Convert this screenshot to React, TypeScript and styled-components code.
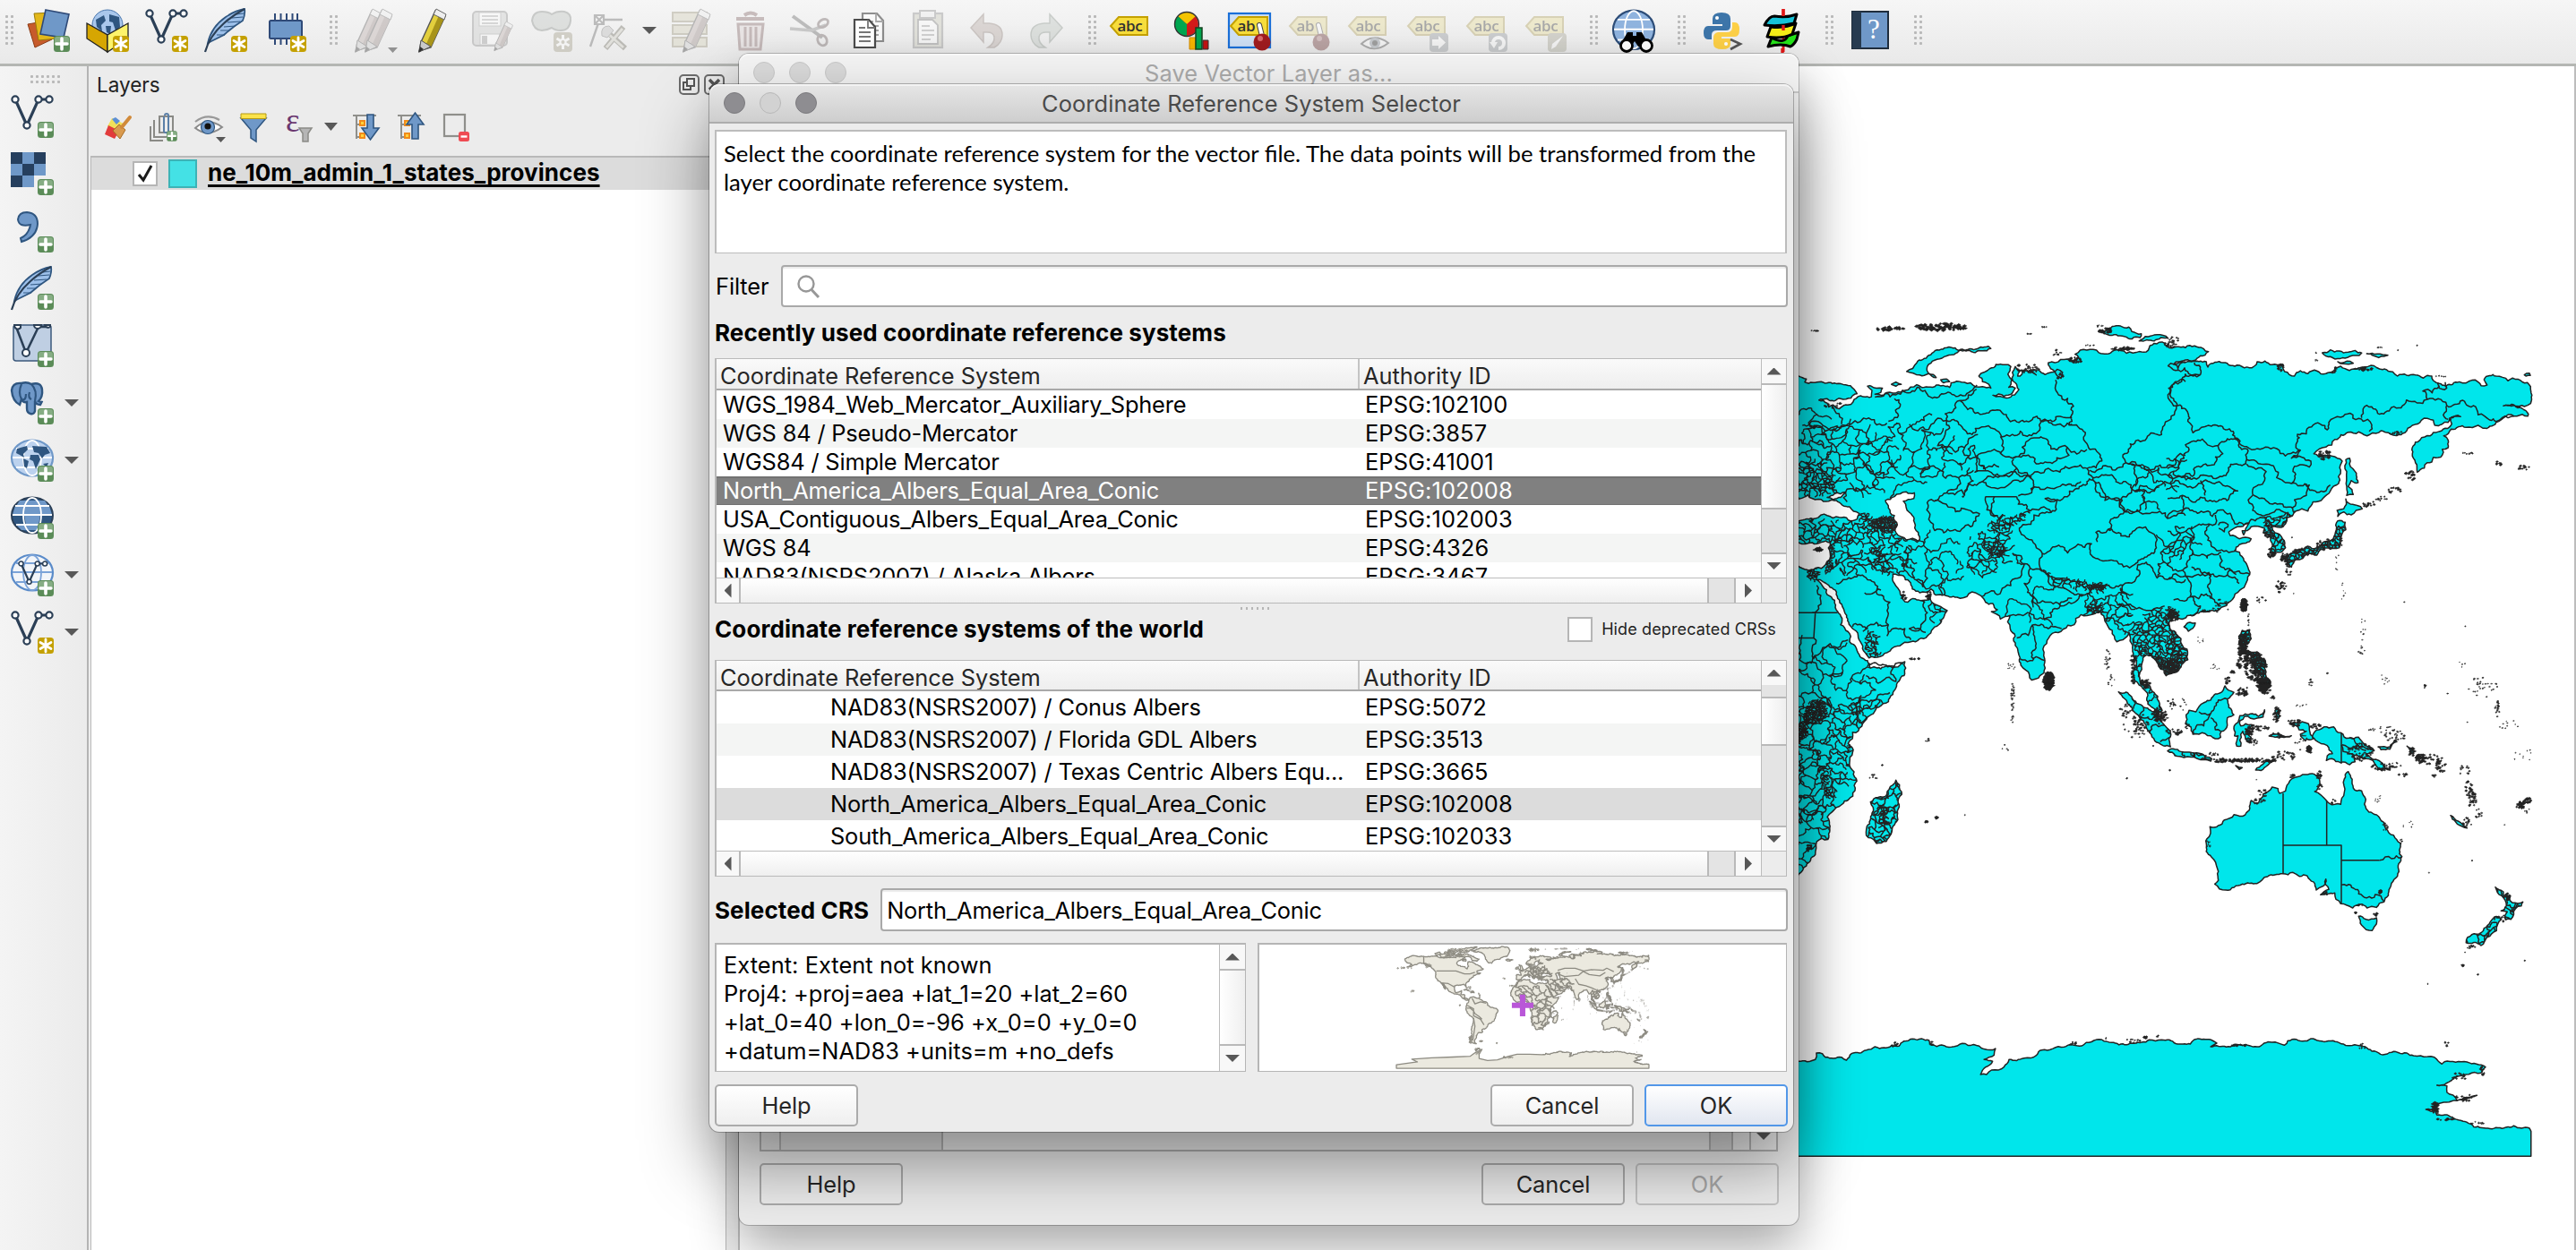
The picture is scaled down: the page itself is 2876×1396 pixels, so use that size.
import React from "react";
import styled, { createGlobalStyle, css } from "styled-components";

const GlobalStyle = createGlobalStyle`
  *, *::before, *::after { box-sizing: border-box; }
  html, body { margin: 0; padding: 0; overflow: hidden; background: #fff; }
  body { font-family: Inter, "Liberation Sans", sans-serif; font-size: 25.4px; letter-spacing: -0.1px; color: #000; }
`;

/* ---------- geometry helpers for the maps ---------- */

type P = [number, number];
type Frame = [number, number, number, number];

const FRAMES: Record<string, Frame> = {
  w: [2000, 340, 1 / 3, 0.42088],
  e: [2420, 340, 1 / 3, 1 / 3],
  s: [2340, 760, 1 / 3, 1 / 3],
  a: [2000, 1120, 0.5587, 1 / 3],
  g: [1850.2, 803.5, 5.417, -5.417],
};

function trace(src: string): P[] {
  let f: Frame = FRAMES.g;
  return src.trim().split(/\s+/).map((tok) => {
    if (/[a-z]:/.test(tok)) {
      f = FRAMES[tok[0]];
      tok = tok.slice(2);
    }
    const [x, y] = tok.split(",").map(Number);
    return [f[0] + x * f[2], f[1] + y * f[3]] as P;
  });
}

function random(seed: number) {
  let s = seed;
  return () => {
    s = (s + 0x6d2b79f5) | 0;
    let t = Math.imul(s ^ (s >>> 15), 1 | s);
    t = (t + Math.imul(t ^ (t >>> 7), 61 | t)) ^ t;
    return ((t ^ (t >>> 14)) >>> 0) / 4294967296;
  };
}

function rough(points: P[], closed: boolean, amp: number, seed: number): string {
  const rnd = random(seed);
  const out: P[] = [];
  const split = (a: P, b: P) => {
    const dx = b[0] - a[0];
    const dy = b[1] - a[1];
    const len = Math.hypot(dx, dy);
    if (len < 4) {
      out.push(b);
      return;
    }
    const k = (rnd() - 0.5) * 2 * amp * Math.min(1, 14 / len + 0.35);
    const m: P = [(a[0] + b[0]) / 2 - dy * k, (a[1] + b[1]) / 2 + dx * k];
    split(a, m);
    split(m, b);
  };
  out.push(points[0]);
  const n = closed ? points.length : points.length - 1;
  for (let i = 0; i < n; i++) split(points[i], points[(i + 1) % points.length]);
  return "M" + out.map((p) => p[0].toFixed(1) + " " + p[1].toFixed(1)).join("L") + (closed ? "Z" : "");
}

function inside(p: P, poly: P[]): boolean {
  let hit = false;
  for (let i = 0, j = poly.length - 1; i < poly.length; j = i++) {
    const a = poly[i];
    const b = poly[j];
    if (a[1] > p[1] !== b[1] > p[1] && p[0] < ((b[0] - a[0]) * (p[1] - a[1])) / (b[1] - a[1]) + a[0]) hit = !hit;
  }
  return hit;
}

/* irregular honeycomb of small districts inside a region */
function districts(region: string, size: number, seed: number): string {
  const poly = trace(region);
  const xs = poly.map((p) => p[0]);
  const ys = poly.map((p) => p[1]);
  const x0 = Math.min(...xs);
  const y0 = Math.min(...ys);
  const cols = Math.ceil((Math.max(...xs) - x0) / size) + 1;
  const rows = Math.ceil((Math.max(...ys) - y0) / (size * 0.7)) + 1;
  const vertex = (c: number, r: number): P => {
    const rnd = random(seed * 7919 + c * 131 + r * 7177);
    return [
      x0 + c * size * 0.5 + (rnd() - 0.5) * size * 0.85 + Math.sin(r * 2.3 + seed) * size * 0.2,
      y0 + r * size * 0.7 + ((c + r) % 2 ? size * 0.18 : 0) + (rnd() - 0.5) * size * 0.75 + Math.sin(c * 0.9 + seed) * size * 0.3,
    ];
  };
  const skip = random(seed + 4001);
  let d = "";
  for (let r = 0; r <= rows; r++) {
    for (let c = 0; c <= cols * 2; c++) {
      const v = vertex(c, r);
      const drop = skip() < 0.07;
      if (!inside(v, poly)) continue;
      if (!drop) d += rough([v, vertex(c + 1, r)], false, 0.34, seed + c * 3 + r * 17);
      if ((c + r) % 2) d += rough([v, vertex(c, r + 1)], false, 0.34, seed + c * 5 + r * 11);
    }
  }
  return d;
}

const EURAFRICA = trace(`w:24,190 50,198 45,206 100,205 150,210 210,225 220,237 200,248 165,250 120,250 92,254 120,262 125,272 160,277 175,268 200,265
 210,252 240,245 268,245 270,228 255,217 285,222 305,222 300,233 280,238 310,240 350,235 380,228 420,213 445,220 500,216 530,220 535,208 560,204 600,208 640,218 668,222 660,211
 640,205 628,190 645,180 665,170 685,159 715,160 735,165 725,185 738,200 728,220 750,222 740,235 712,244 675,241 720,248 748,240 762,226 750,208 740,180 750,165 765,178 758,190 780,175 820,187 800,175 850,186 890,172
 908,180 903,196 885,182 865,165 860,155 945,152 962,140 950,132 1030,128 1080,122 1165,125 1215,103 1250,103 e:0,140 60,145 120,148 137,158
 110,172 60,186 20,200 80,192 130,192 135,210 145,198 200,197 225,207 290,207 300,192 350,202 385,204 392,225 425,240 445,222 470,232 530,232 560,228
 560,213 580,207 640,213 720,218 770,240 830,236 885,240 890,255 910,265 1000,263 1040,260 1050,272 1070,270 1060,252 1140,256 1205,262 1216,275
 1216,332 1195,342 1160,338 1125,340 1180,345 1205,362 1207,374 1170,374 1100,395 1057,415 1040,405 1000,412 950,418 925,440 940,455 940,480 920,485 920,505
 890,512 885,528 870,530 860,548 836,562 830,530 820,500 822,475 845,455 880,440 930,415 952,400 950,378 982,376 945,380 940,395 895,405 890,388 850,388 820,405 795,430
 740,430 715,423 640,427 605,428 560,452 530,478 490,500 520,508 550,508 585,525 580,555 573,600 545,625 520,650 470,692 430,692 400,715 395,735
 350,745 360,765 385,785 395,815 375,830 345,832 350,800 345,780 320,765 325,750 280,745 250,758 255,772 272,732 245,745 205,762 210,775 240,785 280,785
 240,805 225,825 250,845 265,870 272,890 275,905 260,940 235,965 210,995 180,1015 130,1030 80,1042 30,1045 5,1065 10,1090 45,1120 65,1155 68,1190
 45,1215 0,1240 w:1255,985 1230,960 1215,940 1190,930 1175,950 1165,985 1180,1008 1215,1030 1242,1078 1225,1082 1190,1050 1165,1010 1145,980 1152,940 1140,900
 1130,870 1110,890 1090,895 1075,865 1050,840 1035,815 1010,822 970,823 910,862 855,900 850,965 805,997 785,970 750,905 733,860 733,825 700,835 670,815 690,810 650,790 635,773
 555,777 505,772 478,768 468,755 430,765 405,755 375,720 340,715 345,740 365,770 390,790 440,785 465,778 480,795 522,812 500,845 455,880 400,895 330,920
 260,938 248,925 235,900 205,860 185,825 155,780 125,745 85,730 120,770 150,810 165,850 195,895 230,935 255,945 265,965 310,962 380,948 383,965 360,1000 340,1035
 300,1065 255,1095 205,1135 190,1165 195,1215 210,1240 213,1290 190,1315 150,1335 120,1360 128,1400 122,1420 85,1425 80,1460 50,1490 24,1512
 g:27,-33.5 20,-34.8 18,-33 15,-27 12,-17 13,-9 9,-1 9,4 4,6 -4,5 -8,4 -13,8 -17,14 -16,21 -10,29 -6,35 3,37 10,37 11,33 19,30 24,32
 w:24,695 80,700 115,690 130,660 130,632 70,632 24,632 g:27,37 26,40 23,38 20,40 13,45 18,40 16,38 10,44 3,43 -2,37 -9,37 -9,43 -2,43 -4,48 3,51 8,54 10,57 12,54
 20,55 23,59 29,60 22,61 24,65 18,62 16,57 12,58 5,59 6,62 14,68 25,71`);

const BLACK_SEA = trace("w:0,530 30,515 55,505 90,517 125,522 150,520 195,537 228,555 220,570 190,572 160,565 120,560 80,568 24,575 0,575");
const AZOV = trace("w:120,512 145,502 182,498 165,512 140,518");
const CASPIAN = trace("w:315,520 345,510 385,497 412,500 410,515 375,522 385,540 405,560 412,578 425,605 425,628 385,625 350,605 355,585 345,560 325,540");
const ANTARCTICA = trace(`a:0,197 14,196 48,190 50,168 62,170 68,182 100,182 110,192 120,170 150,158 185,150 215,145 225,128 260,120 275,125 280,142 320,148 408,153 405,175 385,190 402,196
 378,240 390,240 400,225 425,215 435,190 465,185 490,175 500,158 545,148 560,140 640,133 700,132 715,124 740,124 797,138 805,123 835,122 850,135 838,147 900,142 960,132
 985,142 992,127 1060,128 1130,142 1160,162 1230,168 1285,182 1300,205 1305,197 1350,198 1387,215 1378,235 1330,247 1308,270 1290,276 1310,278 1310,300 1330,327 1370,310 1330,328 1288,335
 1285,350 1268,357 1288,362 1290,376 1350,400 1475,420 1478,430 1478,514 g:-180,-90 -180,-85 -150,-81 -158,-77 -130,-75 -100,-74 -75,-73 -68,-68 -58,-63 -62,-70 -62,-76 -50,-79 -36,-78 -20,-73 -8,-70 10,-70`);
const POLE_CORNER = ANTARCTICA.findIndex((p) => p[1] > 1290);

const ISLANDS: P[][] = [
  "w:350,1262 362,1275 370,1300 355,1345 340,1385 318,1425 285,1430 258,1415 253,1385 270,1350 265,1320 290,1308 320,1300 340,1275",
  "w:386,178 420,155 460,135 560,122 660,111 668,117 640,123 545,133 480,148 455,165 460,183 485,194 430,187",
  "w:1030,72 1075,58 1130,60 1140,72 1172,78 1168,88 1115,85 1060,80",
  "w:1165,97 1185,85 1225,80 1262,90 1215,97",
  "w:335,212 350,206 368,212 350,217",
  "w:500,200 520,198 530,205 510,208",
  "s:76,38 120,55 160,90 205,115 230,150 250,175 250,222 225,218 180,175 148,125 120,90 95,60",
  "s:240,236 265,230 295,240 330,243 360,248 388,262 385,270 340,262 295,258 265,252",
  "s:432,18 462,40 440,62 445,90 462,115 440,125 440,150 420,170 418,190 400,195 385,185 345,180 325,180 318,155 300,145 302,115 312,100 335,105 345,88 385,65 400,45 415,42",
  "s:482,118 500,112 545,120 565,98 560,122 540,126 498,120 482,135 485,152 520,148 530,150 500,162 520,190 518,208 505,200 492,170 485,180 485,220 472,220 476,185 464,185 476,140",
  "s:725,190 765,155 820,175 880,190 900,215 932,235 905,245 930,265 985,300 950,298 905,262 865,250 868,272 850,282 820,275 790,262 772,268 775,252 792,245 775,218 735,200",
  "s:660,145 690,138 712,145 715,165 728,195 700,200 685,180 705,170 680,165",
  "s:945,222 985,222 1000,200 1008,205 985,230 955,232",
  "s:845,305 862,360 890,370 905,430 950,460 970,495 1020,545 1025,590 1015,640 985,695 965,742 908,762 885,750 860,762 820,748 800,712 775,715 752,718 780,700 770,665 758,690 738,702 708,655 660,643 625,647 575,657 540,680 490,682 435,702 398,682 410,670 410,640 395,600 370,560 372,530 382,490 430,467 500,450 520,402 545,410 560,380 590,357 610,362 615,378 635,370 650,335 685,320 745,325 750,350 733,372 770,400 800,415 820,415 832,375 832,330",
  "s:880,790 905,800 940,795 940,815 925,838 905,835 890,820",
  "s:1338,692 1365,708 1370,725 1385,725 1395,745 1430,742 1425,755 1405,765 1390,800 1372,802 1378,775 1357,772 1375,755 1370,735 1345,710",
  "s:1335,792 1358,800 1342,838 1310,860 1290,888 1240,878 1245,860 1275,850 1300,830 1320,810",
  "s:1188,452 1215,472 1243,494 1235,493 1205,474",
  "s:535,300 560,280 598,268 570,288 545,300",
  "s:600,100 612,92 615,120 605,130",
  "s:580,186 615,180 655,185 640,188 600,190",
  "s:1042,220 1065,240 1058,244",
  "s:468,285 490,292 480,298",
  "e:597,520 610,515 620,550 638,597 615,590 605,610 622,637 600,640 598,600 600,560",
  "e:597,652 620,670 652,685 615,705 590,695 570,710 568,690 590,685",
  "e:570,725 595,730 597,755 580,785 575,815 545,820 520,820 500,840 470,835 430,855 415,880 400,865 405,840 440,820 500,815 525,795 555,785 565,755",
  "e:55,1080 75,1065 93,1067 85,1085 70,1095",
  "e:518,162 545,152 605,160 650,163 610,174 545,175",
  "e:667,165 738,170 725,174 690,172",
  "e:570,192 600,190 622,197 590,199",
  "e:1195,236 1212,230 1215,238 1200,240",
  "e:250,1092 275,1090 280,1120 262,1140 262,1160 300,1165 328,1195 328,1225 345,1270 328,1298 305,1280 318,1250 290,1215 280,1175 250,1170 240,1135",
].map(trace);

const AMERICAS: P[][] = [
  "g:-168,66 -165,68 -156,71 -141,70 -128,70 -115,68 -108,68 -95,68 -95,72 -90,69 -82,69 -86,66 -94,60 -92,57 -82,55 -79,52 -77,56 -78,62 -72,62 -65,58 -61,56 -56,52 -65,49 -65,47 -60,46 -66,44 -70,43 -70,41 -76,37 -76,35 -81,31 -80,25 -82,28 -84,30 -90,29 -97,28 -97,22 -95,18 -91,19 -87,21 -88,16 -83,15 -83,10 -78,9 -77,7 -80,7 -85,10 -88,13 -95,16 -105,20 -107,24 -112,30 -114,31 -110,23 -112,25 -117,33 -121,35 -124,40 -124,48 -130,54 -135,58 -140,60 -148,60 -152,58 -156,57 -165,54.500 -158,58 -165,61",
  "g:-77,7 -75,11 -72,12 -68,11 -62,10 -57,6 -51,4 -50,0 -44,-3 -37,-5 -35,-8 -38,-13 -40,-20 -42,-23 -48,-26 -50,-30 -54,-34 -58,-35 -57,-38 -62,-39 -65,-42 -66,-46 -69,-51 -66,-55 -72,-53 -75,-50 -73,-40 -72,-30 -70,-20 -76,-14 -81,-5 -80,0",
  "g:-73,78 -66,80 -60,82 -45,82 -30,84 -20,82 -18,78 -20,74 -22,70 -30,68 -40,65 -44,60 -49,61 -53,66 -54,70 -58,75 -66,76",
  "g:-90,73 -78,73 -70,70 -62,66 -65,63 -72,64 -73,67 -78,70 -88,70",
  "g:-118,73 -110,73 -105,73 -102,69 -110,68 -116,69",
  "g:-125,74 -118,76 -116,73 -123,71",
  "g:-90,76 -86,80 -80,82 -65,83 -75,79 -80,76",
  "g:-100,76 -95,79 -92,77 -98,73",
  "g:-86,66 -81,66 -81,63 -86,64",
  "g:-24,65 -20,66 -14,65 -18,63",
  "g:-5,50 1,51 -2,57 -5,58 -3,54",
  "g:-10,52 -6,52 -6,55 -9,54",
  "g:-84,22 -75,20 -80,23",
  "g:-74,18 -69,18 -70,20 -73,20",
].map(trace);

const BORDERS = [
  "w:280,246 350,240 545,240 600,230 622,214",
  "w:520,308 515,290 550,262 565,255 620,225",
  "w:565,255 580,268 690,280 720,292 900,297 940,300",
  "w:885,200 885,215 895,240 945,270 940,310 930,320 985,340 1000,385 1030,395 1040,415 990,435 1010,460 1040,490 1050,520 1110,520",
  "w:395,318 520,308 560,318 605,345 680,330 740,345 790,350 830,320 940,318",
  "w:520,308 515,345 490,375 520,378 580,380 625,345",
  "w:345,250 365,265 355,300 325,310",
  "w:60,318 200,318 320,315",
  "w:135,270 160,290 168,318",
  "w:700,350 705,375 700,395 740,408 780,395 785,365",
  "w:785,365 860,370 925,380 990,385",
  "w:740,408 800,405 850,418 930,400 925,380",
  "w:580,380 580,400 620,405 700,392",
  "w:620,400 615,445 700,455 755,435 745,410",
  "w:755,435 800,455 870,440 900,445 990,435",
  "w:430,450 440,445 490,435 560,460 520,500 460,520",
  "w:560,460 610,440",
  "w:640,470 805,458",
  "w:580,508 640,470 700,455 800,460 805,500 760,508",
  "w:805,500 890,485 970,470",
  "w:520,500 570,492 580,508",
  "w:460,520 460,570 480,600 540,600 600,590 630,555 590,545 550,550 480,520",
  "w:650,510 655,545 690,560 680,510",
  "w:755,510 760,530 800,548 870,552 890,520 850,515 890,518 950,490 990,470 1010,465",
  "w:870,552 770,590 770,610 830,650 840,660 1005,635 1010,670 1080,680 1150,690 1190,670 1220,640 1215,610 1150,600 1060,597 1020,605 1025,630",
  "w:1060,597 1070,570 1115,550 1060,510 1010,465",
  "w:1115,550 1200,555 1320,560",
  "w:1115,550 1165,548 1175,510",
  "w:740,660 770,690 800,700 860,735 920,755 1000,755 1110,745 1150,735 1160,690",
  "w:840,660 830,690 860,715 930,730 1000,745",
  "w:740,660 780,690 740,730 690,770 640,775",
  "w:800,700 780,740 800,770 860,790 930,790 980,770",
  "w:735,825 800,820 870,830 900,800 940,780",
  "w:755,885 810,850 860,860 905,860",
  "w:805,850 820,900 810,940 850,945",
  "w:765,940 800,945 812,940",
  "w:1160,690 1210,700 1260,730 1320,730",
  "w:1110,745 1120,790 1180,810 1250,800",
  "w:1285,205 1280,250 1290,270 1250,320 1240,345 1190,355 1135,370 1110,405 1120,420 1190,440 1220,430 1320,400",
  "w:1262,162 1320,152",
  "w:1285,205 1320,205",
  "w:1000,440 1060,430 1120,420 1150,440 1160,470 1140,490",
  "w:1010,460 1100,475 1140,490 1200,500 1250,470 1320,480",
  "w:1115,550 1110,510 1140,490",
  "w:150,740 250,725 330,790 325,850 250,860 205,855",
  "w:245,765 290,755 300,758",
  "w:325,850 320,880",
  "w:185,720 240,690 330,715",
  "w:325,870 380,860 400,890",
  "w:440,785 450,830 395,860 450,870",
  "w:400,690 440,750",
  "w:440,750 455,700 510,730 510,772",
  "w:590,690 640,725 690,700",
  "w:85,745 90,800 70,818",
  "w:75,885 75,940 130,900 190,890",
  "w:255,960 345,960 350,1000 290,1005 250,985",
  "w:220,1120 215,1060 330,1030",
  "w:345,960 375,955",
  "e:0,205 110,235 90,195",
  "e:110,235 20,265 20,340 60,350 85,430 170,408 220,425 240,465 310,485 445,488 415,515 480,525 475,545 420,560 415,600 475,605 465,640 425,655 420,692",
  "e:445,488 430,480 435,435 535,420 540,395 580,378 640,382 670,385 675,425",
  "e:650,380 655,350 750,345 800,320 870,318 855,290 910,275 905,262",
  "e:870,318 935,338 1035,350 1040,370 1120,380 1160,374",
  "e:935,338 940,385",
  "e:905,275 935,280 930,260",
  "e:0,550 55,515 60,470 175,465 185,500 110,545 40,575 0,572",
  "e:175,465 200,450 225,450 240,465 270,490 265,520 330,535 365,580 415,600",
  "e:40,575 170,580 250,540 265,520",
  "e:265,535 330,560 325,590 285,620 300,645 360,665 420,685",
  "e:285,640 270,655 285,690 330,705 400,700",
  "e:0,715 100,700 150,710 210,700 225,735 280,720 330,720",
  "e:60,605 180,600 235,625 150,660 50,640 0,650",
  "e:110,590 125,640",
  "e:50,640 45,700",
  "e:0,760 60,760 100,740 150,740 160,705",
  "e:85,830 90,780 60,760",
  "e:140,735 135,790 165,825 230,825",
  "e:0,865 50,890 85,830 180,830",
  "e:80,880 180,910 275,905",
  "e:50,890 60,910 145,910 140,960 150,985",
  "e:0,920 60,910 75,980 130,970 150,985 200,1005",
  "e:175,840 180,880 230,905",
  "e:200,905 240,935",
  "e:20,990 75,980 110,1010 75,1040",
  "e:465,600 500,630 530,625 545,605",
  "e:170,740 185,730 202,745 190,762 172,750",
  "s:950,602 990,597 1025,592",
  "s:822,685 840,687 880,715 935,717 965,740",
  "s:345,105 385,110 410,65 440,62",
  "s:385,110 375,130 335,155 330,180",
  "s:385,125 405,150 400,165 418,170",
  "s:825,215 860,225 905,235",
  "s:850,190 870,210 930,232",
  "s:822,215 850,245 905,262",
  "s:120,60 125,95",
  "s:160,90 148,125 180,130 205,115",
  "s:180,175 190,150 230,150",
  "s:250,190 215,205",
].map((b, i) => rough(trace(b), false, 0.3, 500 + i)).join("");

const STRAIGHT_BORDERS = [
  "s:627,378 627,647", "s:773,402 773,552", "s:627,552 822,552 822,750", "s:822,602 950,602", "s:822,175 822,278",
  "w:24,818 155,818", "w:24,885 75,885 80,820", "w:650,510 755,510",
].map((b) => "M" + trace(b).map((p) => p.join(" ")).join("L")).join("");

const DISTRICTS = [
  districts("w:0,320 330,320 330,420 300,500 120,500 0,510", 15, 3),
  districts("w:0,240 140,270 130,320 0,320", 26, 5),
  districts("w:0,410 120,420 150,500 0,515", 10, 61),
  districts("w:330,310 480,320 500,440 330,500", 27, 7),
  districts("w:480,375 640,370 640,440 500,430", 26, 8),
  districts("w:0,570 220,575 330,560 390,640 330,640 0,632", 8, 9),
  districts("w:262,575 300,560 335,562 350,578 372,582 350,603 300,600 262,590", 2.6, 10),
  districts("w:225,550 270,560 280,600 230,575", 5, 62),
  districts("w:130,635 400,640 390,715 260,700 130,720", 12, 12),
  districts("w:255,640 300,650 330,710 270,690", 7, 63),
  districts("w:115,640 138,640 135,700 112,720", 3.4, 32),
  districts("w:50,700 80,695 95,715 75,735 50,722", 3.4, 33),
  districts("w:390,600 520,620 580,770 480,765 380,710", 26, 13),
  districts("w:560,690 600,620 660,590 730,600 720,690 600,720", 11, 14),
  districts("w:650,580 690,560 740,565 800,545 740,590 680,605", 4.5, 15),
  districts("w:640,640 690,625 720,640 705,670 660,665", 4, 34),
  districts("w:850,715 1050,745 1040,765 870,740", 6, 16),
  districts("w:992,748 1010,738 1048,745 1040,757 1005,757", 2.4, 17),
  districts("w:980,760 1120,750 1130,880 1070,860 980,820", 12, 18),
  districts("w:1000,790 1040,790 1040,820 985,820", 4.5, 64),
  districts("w:1130,850 1200,810 1270,810 1320,870 1320,975 1255,985 1140,900", 6, 19),
  districts("w:1170,925 1230,935 1300,960 1280,990 1240,980 1190,940", 3, 35),
  districts("w:1140,880 1170,900 1240,1080 1150,990", 8, 36),
  districts("e:0,1070 70,1110 70,1210 0,1240", 7, 20),
  districts("e:0,1180 50,1190 30,1230 0,1240", 3.2, 37),
  districts("e:0,1010 40,1045 0,1060", 3.4, 38),
  districts("w:240,860 290,880 290,930 250,935", 4.5, 21),
  districts("w:430,780 530,800 500,850 460,830", 11, 22),
  districts("w:0,900 200,900 250,960 240,1050 0,1050", 21, 23),
  districts("w:0,1050 200,1050 200,1200 120,1340 0,1380", 13, 24),
  districts("w:200,1050 330,1040 260,1110 200,1130", 11, 25),
  districts("w:50,1065 70,1048 112,1055 118,1090 80,1112 30,1115", 2.5, 26),
  districts("w:0,1110 45,1110 52,1145 20,1165 0,1170", 2.5, 27),
  districts("w:90,1230 112,1225 130,1290 130,1315 108,1300", 4, 28),
  districts("w:120,1220 210,1220 213,1310 120,1340", 27, 39),
  districts("w:0,1340 130,1340 130,1420 0,1520", 20, 40),
  districts("w:1130,420 1320,400 1320,480 1160,480", 22, 41),
  districts("w:1130,480 1320,490 1320,545 1130,540", 26, 42),
  districts("w:700,760 900,770 850,850 740,830", 32, 43),
  districts("w:1220,560 1320,600 1320,690 1200,690", 22, 44),
  districts("e:320,710 430,690 400,840 330,840", 6.5, 29),
  districts("e:0,770 70,760 80,830 0,860", 20, 45),
].join("");

const ISLAND_DISTRICTS = [
  districts("e:395,815 500,790 600,720 600,830 400,885", 4.6, 51),
  districts("e:235,1085 350,1085 350,1300 235,1300", 3.4, 52),
  districts("w:260,1260 375,1260 340,1430 250,1430", 10, 53),
  districts("w:290,1330 320,1330 320,1390 290,1390", 4, 65),
  districts("s:1230,690 1435,690 1435,800 1350,800", 9, 54),
  districts("s:1230,790 1360,790 1300,890 1230,890", 12, 55),
  districts("s:240,230 390,235 390,272 240,260", 10, 56),
].join("");

/* small islands: centre, spread, count, largest radius */
const SPECKS: [string, number, number, number, number][] = [
  ["w:330,65", 16, 2, 26, 2.2], ["w:500,60", 30, 4, 90, 2.4], ["w:80,70", 6, 0.5, 10, 1], ["w:800,78", 4, 0.4, 6, 1], ["w:846,60", 4, 0.5, 6, 1],
  ["w:1050,70", 8, 3, 26, 1.8], ["w:1110,118", 14, 2, 30, 1.8], ["w:950,148", 8, 3, 26, 1.7], ["w:890,128", 6, 4, 10, 1.3], ["w:1000,108", 5, 1, 6, 1], ["w:1030,57", 5, 1, 6, 1],
  ["w:790,170", 14, 5, 30, 1.7], ["w:898,190", 4, 3, 10, 1.5], ["w:145,268", 12, 3, 18, 1.4], ["w:90,650", 5, 2, 18, 2],
  ["w:862,1000", 5.5, 10, 150, 2.4], ["w:740,1040", 2.5, 16, 30, 1.1], ["w:735,960", 5, 4, 9, 0.8], ["w:740,1100", 2, 4, 6, 1],
  ["w:1058,940", 3, 12, 18, 1.2], ["w:1072,1000", 4, 8, 10, 1], ["w:1146,960", 3, 20, 40, 1.7], ["w:1160,1120", 18, 14, 24, 1.5], ["w:455,1157", 2, 3, 6, 1.2],
  ["w:268,1255", 7, 4, 7, 1.2], ["w:452,1373", 1, 1, 6, 1.8], ["w:486,1363", 1, 1, 6, 2], ["w:415,941", 7, 1.5, 9, 1.5], ["w:716,1178", 4, 5, 6, 0.9],
  ["w:375,775", 3, 5, 12, 1.8], ["w:460,775", 3, 6, 14, 1.8], ["w:1235,1090", 7, 10, 36, 1.7], ["w:1270,1060", 5, 6, 8, 1.2], ["w:1300,1138", 6, 2, 8, 1.3], ["w:193,1185", 2, 9, 9, 1.3],
  ["w:60,1442", 3, 4, 20, 1.6], ["w:575,510", 1, 1, 3, 1.2],
  ["e:380,212", 4, 4, 18, 1.8], ["e:655,217", 10, 2, 24, 1.7], ["e:560,220", 4, 3, 8, 1.4], ["e:765,431", 9, 1.6, 14, 1.4], ["e:525,505", 9, 5, 30, 1.8], ["e:915,241", 7, 0.6, 5, 1],
  ["e:1005,498", 6, 1.5, 7, 1.3], ["e:1108,535", 4, 3, 9, 1.5], ["e:1190,548", 8, 2.5, 12, 1.7], ["e:20,122", 8, 5, 14, 1.3], ["e:10,135", 9, 3, 20, 1.4],
  ["e:812,575", 6, 6, 18, 1.8], ["e:760,625", 7, 4, 14, 1.6], ["e:715,650", 7, 3, 10, 1.4], ["e:675,668", 7, 4, 16, 1.7], ["e:390,850", 4, 6, 18, 1.8], ["e:345,835", 5, 5, 22, 1.8], ["e:340,755", 6, 9, 30, 1.7],
  ["e:405,890", 3, 7, 12, 1.5], ["e:380,945", 6, 8, 22, 1.6], ["e:310,990", 8, 3, 8, 1.3], ["e:256,1008", 3.4, 7, 110, 2], ["e:270,1050", 1, 9, 7, 1],
  ["e:568,865", 2, 14, 7, 0.8], ["e:590,960", 4, 12, 7, 0.8], ["e:655,1090", 3, 14, 9, 0.9], ["e:648,1160", 4, 6, 8, 1.1],
  ["e:455,830", 14, 5, 26, 1.6], ["e:530,805", 14, 6, 30, 1.6], ["e:405,855", 4, 8, 20, 1.7], ["e:578,790", 3, 9, 12, 1.5],
  ["e:255,1150", 6, 16, 90, 2], ["e:295,1215", 12, 16, 140, 2], ["e:325,1280", 7, 9, 70, 1.8], ["e:215,1235", 3, 3, 9, 1.4], ["e:240,1205", 3, 6, 14, 1.8], ["e:200,1258", 3, 5, 12, 1.6], ["e:255,1300", 9, 4, 18, 1.7],
  ["e:480,1268", 2, 5, 8, 1.1], ["e:725,1260", 6, 8, 8, 0.8], ["e:1060,1280", 16, 12, 18, 1.2], ["e:110,1125", 6, 5, 7, 0.7], ["e:155,1220", 6, 5, 8, 0.7], ["e:440,1340", 10, 4, 6, 0.9], ["e:860,1280", 2, 2, 4, 1],
  ["e:990,1205", 6, 4, 4, 0.9], ["e:1103,1350", 2, 9, 10, 1.2], ["e:180,1010", 10, 8, 18, 1.3], ["e:130,1028", 5, 2, 12, 1.5], ["e:20,1040", 7, 7, 44, 1.7],
  ["s:100,100", 7, 8, 18, 1.6], ["s:145,155", 7, 9, 24, 1.7], ["s:205,118", 6, 6, 34, 1.8], ["s:228,125", 4, 6, 14, 1.6], ["s:255,80", 4, 3, 6, 1.2], ["s:292,75", 4, 8, 8, 1.1],
  ["s:260,172", 10, 3, 18, 1.4], ["s:280,178", 4, 2, 6, 1.2], ["s:305,152", 3, 3, 6, 1.4], ["s:165,10", 5, 6, 30, 1.8], ["s:435,268", 18, 2, 36, 1.9], ["s:530,268", 24, 2.4, 54, 1.9], ["s:630,252", 16, 5, 26, 1.7],
  ["s:380,248", 10, 2, 14, 1.3], ["s:515,180", 5, 10, 30, 1.8], ["s:545,160", 12, 3, 24, 1.6], ["s:605,115", 4, 9, 30, 1.7], ["s:590,62", 3, 5, 9, 1.3], ["s:665,140", 7, 5, 26, 1.7], ["s:735,152", 6, 3, 18, 1.5],
  ["s:715,232", 2.6, 4, 30, 1.8], ["s:690,205", 8, 10, 12, 1.2], ["s:560,15", 7, 7, 80, 2], ["s:500,35", 10, 5, 14, 1.5], ["s:605,185", 7, 3, 14, 1.4],
  ["s:1000,185", 12, 7, 26, 1.4], ["s:970,165", 10, 4, 9, 1.1], ["s:925,165", 5, 1, 6, 1], ["s:885,240", 14, 10, 66, 1.4], ["s:960,290", 14, 4, 30, 1.7], ["s:1000,280", 9, 4, 9, 1.2], ["s:1028,315", 5, 3, 8, 1.5],
  ["s:1060,240", 5, 5, 14, 1.7], ["s:1088,262", 6, 5, 34, 2.1], ["s:1125,265", 12, 6, 22, 1.6], ["s:1155,290", 6, 7, 22, 1.8], ["s:1132,320", 2, 2, 6, 1.5],
  ["s:1235,302", 6, 6, 12, 1.4], ["s:1248,360", 4, 10, 18, 1.6], ["s:1260,395", 5, 10, 28, 1.8], ["s:1282,445", 4, 8, 9, 1.4], ["s:1245,475", 6, 5, 14, 1.6], ["s:1422,418", 5, 4, 28, 2], ["s:1445,402", 5, 3, 18, 1.8], ["s:1450,436", 5, 4, 5, 1],
  ["s:1345,100", 3, 9, 10, 1.2], ["s:1380,150", 12, 8, 10, 1], ["s:1430,255", 12, 10, 9, 0.9], ["s:1290,25", 14, 9, 12, 1.1], ["s:1100,18", 2, 2, 4, 1], ["s:955,400", 7, 5, 8, 0.7], ["s:1045,482", 8, 4, 7, 0.7],
  ["s:655,320", 4, 1.6, 12, 1.5], ["s:748,322", 3, 6, 20, 1.5], ["s:750,355", 3, 3, 7, 1.4], ["s:560,378", 6, 5, 12, 1.4], ["s:545,405", 7, 3, 12, 1.4], ["s:376,548", 3, 4, 9, 1], ["s:952,708", 1.4, 2, 14, 1.6],
  ["s:968,490", 4, 4, 10, 1.2], ["s:1020,540", 2, 3, 6, 1.2], ["s:870,778", 1, 2, 7, 1.3], ["s:937,784", 2, 2, 10, 1.5], ["s:795,405", 3, 3, 8, 1.3], ["s:1380,725", 3, 4, 20, 1.7], ["s:1360,797", 4, 4, 8, 1.5], ["s:1257,893", 5, 2, 9, 1.4], ["s:1229,955", 1, 1, 5, 1.6],
  ["s:530,205", 4, 4, 12, 1.2], ["s:775,712", 5, 2, 12, 1.1], ["s:885,752", 4, 1, 8, 1.2],
  ["a:280,136", 2, 2, 6, 1.6], ["a:205,140", 5, 3, 10, 1.4], ["a:565,137", 6, 2, 9, 1.4], ["a:680,128", 10, 2, 12, 1.3], ["a:708,117", 2, 1, 6, 1.7], ["a:732,112", 2, 1, 4, 1.1], ["a:628,120", 1, 1, 2, 1.2], ["a:1312,136", 4, 4, 5, 1.3],
  ["a:895,143", 9, 1, 14, 1.3], ["a:1380,228", 3, 5, 12, 1.5], ["a:1335,247", 9, 4, 16, 1.5], ["a:1345,318", 10, 4, 22, 1.6], ["a:1287,355", 4, 8, 34, 2], ["a:1305,390", 10, 1, 14, 1.7], ["a:1370,403", 9, 1.4, 8, 1.4], ["a:1140,145", 5, 3, 7, 1.4],
  ["s:104,328", 0.4, 0.4, 2, 1], ["s:247,301", 0.4, 0.4, 2, 1], ["s:538,333", 0.4, 0.4, 1, 0.8], ["s:1368,484", 0.4, 0.4, 1, 1], ["s:1115,644", 0.4, 0.4, 1, 1], ["s:1260,603", 0.4, 0.4, 2, 1], ["s:1279,985", 0.4, 0.4, 2, 1.3], ["s:1436,938", 0.4, 0.4, 2, 1],
  ["s:1112,1017", 0.4, 0.4, 2, 1], ["s:1243,140", 0.4, 0.4, 1, 1], ["s:1178,44", 0.4, 0.4, 2, 1], ["s:1237,911", 0.4, 0.4, 1, 1], ["e:793,996", 0.4, 0.4, 1, 1], ["e:998,1078", 0.4, 0.4, 1, 1], ["e:535,1236", 0.4, 0.4, 2, 1.1], ["e:423,970", 0.4, 0.4, 1, 1], ["e:772,153", 0.4, 0.4, 2, 1], ["e:835,138", 0.4, 0.4, 2, 1],
  ["e:711,145", 3, 0.5, 4, 1], ["e:497,162", 1, 0.4, 2, 1], ["e:497,187", 2, 0.8, 4, 1], ["e:417,781", 0.4, 0.4, 1, 1], ["w:580,1355", 0.4, 0.4, 1, 1], ["w:305,1223", 1, 0.4, 3, 1], ["w:1124,1258", 0.4, 0.4, 1, 1], ["w:1267,1236", 0.4, 0.4, 1, 1], ["w:1212,1171", 0.4, 0.4, 2, 1],
];

const speckPath = (list: [string, number, number, number, number][], start: number) => list.map(([at, sx, sy, n, r], i) => {
  const [cx, cy] = trace(at)[0];
  const rnd = random(start + i * 13);
  let d = "";
  for (let k = 0; k < n; k++) {
    const t = rnd() * Math.PI * 2;
    const q = Math.sqrt(rnd());
    const x = cx + Math.cos(t) * sx * q;
    const y = cy + Math.sin(t) * sy * q;
    const a = r * (0.55 + rnd() * 0.55);
    const b = r * (0.4 + rnd() * 0.5);
    d += `M${(x - a).toFixed(1)} ${y.toFixed(1)}l${a.toFixed(1)} ${(-b).toFixed(1)}l${a.toFixed(1)} ${(b * 0.8).toFixed(1)}l${(-a).toFixed(1)} ${b.toFixed(1)}z`;
  }
  return d;
}).join("");

const SPECK_PATH = speckPath(SPECKS, 900);
const WESTERN_SPECKS = speckPath([
  ["g:-95,76", 90, 26, 40, 12], ["g:-100,71", 60, 14, 20, 9], ["g:-135,57", 22, 16, 10, 8], ["g:-168,53", 60, 5, 9, 7], ["g:-74,-49", 10, 34, 16, 9], ["g:-157,20", 16, 8, 4, 7],
  ["g:-62,14", 8, 22, 6, 6], ["g:-76,25", 18, 12, 6, 6], ["g:-16,28", 14, 3, 4, 6], ["g:-27,38", 10, 4, 3, 6], ["g:-90,0", 4, 3, 2, 7], ["g:16,79", 34, 10, 14, 11], ["g:-59,-51.500", 10, 2, 4, 9],
  ["g:-37,-54", 4, 2, 2, 8], ["g:10,57", 20, 12, 10, 8], ["g:24,38", 10, 14, 12, 7], ["g:15,68", 30, 20, 12, 8], ["g:-64,-66", 20, 26, 14, 9], ["g:-20,-74", 40, 6, 8, 9],
], 4200);

const MAIN_LAND = rough(EURAFRICA, true, 0.2, 11);
const SEAS = [BLACK_SEA, AZOV, CASPIAN].map((s, i) => rough(s, true, 0.2, 60 + i)).join("");
const ISLAND_PATH = ISLANDS.map((s, i) => rough(s, true, 0.18, 80 + i)).join("");
const ANTARCTICA_PATH = rough(ANTARCTICA.slice(0, POLE_CORNER), false, 0.14, 5) + "L" + ANTARCTICA.slice(POLE_CORNER).map((p) => p.join(" ")).join("L") + "Z";
const AMERICA_PATH = AMERICAS.map((s, i) => rough(s, true, 0.18, 300 + i)).join("");

const MINI_BORDERS = [
  "g:-141,70 -141,60 -130,55", "g:-123,49 -95,49 -83,45 -75,45 -68,47", "g:-117,32 -106,31 -97,26", "g:-70,-18 -68,-30 -71,-50", "g:-79,0 -70,-5 -70,-15 -60,-20 -55,-28", "g:-72,10 -68,2 -60,5 -52,3",
  "g:50,50 60,53 75,53 87,49 80,43 60,41 50,45", "g:87,49 98,51 115,50 120,53 130,48", "g:75,38 80,30 90,28 98,25 105,22", "g:87,48 95,44 110,42 118,47", "s:822,175 822,278", "g:-80,-4 -75,-4 -70,-8 -68,-12 -62,-16 -58,-20",
].map((b) => "M" + trace(b).map((p) => p.join(" ")).join("L")).join("");
const MINI_MESH = districts("g:-15,33 32,30 40,5 38,-25 20,-33 12,-15 10,2 -10,6", 52, 71) + districts("g:0,43 25,38 40,45 30,58 8,54", 24, 72) + districts("g:35,38 70,40 70,25 45,15 36,28", 42, 73) + districts("g:98,22 108,20 106,10 99,12", 20, 74);

/* ---------- shell ---------- */

const Screen = styled.div`
  position: relative; width: 2876px; height: 1396px; overflow: hidden;
  display: flex; flex-direction: column; background: #ececec;
`;
const Toolbar = styled.div`
  height: 74px; flex: none; display: flex; align-items: flex-start; padding: 10px 0 0 6px;
  background: linear-gradient(#f6f6f6, #e9e9e9); border-bottom: 3px solid #b4b6b3;
`;
const Grip = styled.span<{ gap?: number; wide?: boolean }>`
  flex: none; margin-left: ${(p) => p.gap ?? 0}px;
  width: ${(p) => (p.wide ? 34 : 9)}px; height: ${(p) => (p.wide ? 9 : 34)}px;
  margin-top: ${(p) => (p.wide ? 0 : 7)}px;
  background-image: radial-gradient(circle at 1.5px 1.5px, #b9b9b9 1.3px, transparent 1.8px);
  background-size: 6px 6px;
`;
const Slot = styled.span<{ gap?: number; dim?: boolean }>`
  flex: none; width: 48px; height: 48px; margin-left: ${(p) => p.gap ?? 18}px; opacity: ${(p) => (p.dim ? 0.38 : 1)};
  filter: ${(p) => (p.dim ? "saturate(0.45)" : "none")};
  svg { display: block; width: 48px; height: 48px; overflow: visible; }
`;
const Triangle = styled.span<{ size: number; tall: number; dir?: "up" | "down" | "left" | "right" }>`
  flex: none; display: block; background: #585858; width: ${(p) => p.size}px; height: ${(p) => p.tall}px;
  clip-path: ${(p) =>
    ({ up: "polygon(50% 0,100% 100%,0 100%)", down: "polygon(0 0,100% 0,50% 100%)", left: "polygon(100% 0,100% 100%,0 50%)", right: "polygon(0 0,100% 50%,0 100%)" })[p.dir ?? "down"]};
`;
const MenuArrow = styled(Triangle)`margin: 20px -5px 0 11px;`;
const Workspace = styled.div`flex: 1; display: flex; min-height: 0;`;
const SideBar = styled.div`
  width: 99px; flex: none; padding: 10px 0 0 12px; border-right: 2px solid #b4b4b4;
  background: linear-gradient(90deg, #f4f4f4, #ebebeb); display: flex; flex-direction: column;
`;
const SideRow = styled.div`display: flex; align-items: center; height: 48px; margin-bottom: 16px; gap: 12px;`;
const SideGrip = styled(Grip)`margin: 0 0 13px 22px;`;
const LayersPanel = styled.div`width: 712px; flex: none; display: flex; flex-direction: column; padding-left: 2px;`;
const PanelTitle = styled.div`
  display: flex; align-items: center; height: 40px; padding: 0 2px 0 7px; font-size: 22.5px; color: #222; letter-spacing: 0;
  span { flex: 1; }
`;
const PanelButton = styled.i`
  width: 23px; height: 23px; margin-left: 5px; border: 2px solid #6b6b6b; border-radius: 5px; display: flex; align-items: center; justify-content: center;
  svg { width: 17px; height: 17px; display: block; }
`;
const PanelTools = styled.div`
  display: flex; align-items: center; height: 60px; padding: 0 0 5px 15px;
  svg { width: 32px; height: 32px; margin-right: 18.4px; overflow: visible; }
`;
const PanelArrow = styled(Triangle)`margin: 0 16px 0 -6px;`;
const Tree = styled.div`flex: 1; border: 2px solid #b9b9b9; border-bottom: 0; border-width: 2px 1px 0 1px; background: #fff;`;
const LayerRow = styled.div`display: flex; align-items: center; height: 36px; background: #dcdcdc; padding-left: 46px;`;
const CheckBox = styled.span`
  width: 28px; height: 28px; flex: none; border: 2px solid #b5b5b5; background: #fff; display: flex; align-items: center; justify-content: center;
  svg { width: 22px; height: 22px; }
`;
const Swatch = styled.span`width: 32px; height: 32px; margin: 0 12px; background: #44e1e5; border: 2px solid #3cb3b6;`;
const LayerName = styled.b`
  font-size: 26px; font-weight: 700; letter-spacing: 0.05px; line-height: 30px; padding-bottom: 2px;
  text-decoration: underline; text-decoration-thickness: 3px; text-underline-offset: 4px; text-decoration-skip-ink: none;
`;
const SplitBar = styled.div`width: 15px; flex: none; border-right: 2px solid #bdbdbd; background: #ececec;`;
const Canvas = styled.div`flex: 1; background: #fff; border-right: 2px solid #bdbdbd; svg { display: block; }`;

/* ---------- windows ---------- */

const Window = styled.section<{ x: number; y: number; w: number; h: number; back?: boolean }>`
  position: absolute; left: ${(p) => p.x}px; top: ${(p) => p.y}px; width: ${(p) => p.w}px; height: ${(p) => p.h}px;
  display: flex; flex-direction: column; background: #ececec; border-radius: 11px;
  ${(p) =>
    p.back
      ? css`box-shadow: 0 0 0 1px rgba(0,0,0,.22), 0 28px 56px rgba(0,0,0,.32);`
      : css`box-shadow: 0 0 0 1px rgba(0,0,0,.26), 0 36px 76px rgba(0,0,0,.42);`}
`;
const TitleBar = styled.header<{ back?: boolean }>`
  height: 44px; flex: none; display: grid; grid-template-columns: 1fr auto 1fr; align-items: center; padding: 0 16px;
  border-radius: 11px 11px 0 0; border-bottom: 2px solid ${(p) => (p.back ? "#c8c8c8" : "#adadad")};
  background: ${(p) => (p.back ? "#f4f4f4" : "linear-gradient(#e6e6e6, #cecece)")};
  color: ${(p) => (p.back ? "#ababab" : "#4a4a4a")}; font-size: 25.4px; letter-spacing: 0.1px; box-shadow: inset 0 2px 0 rgba(255,255,255,.55);
`;
const Lights = styled.div`display: flex; gap: 16px;`;
const Light = styled.i<{ tone: "on" | "off" | "back" }>`
  width: 24px; height: 24px; border-radius: 50%;
  background: ${(p) => ({ on: "#8e8d91", off: "#d2d2d2", back: "#dadada" })[p.tone]};
  border: 1px solid ${(p) => ({ on: "#7b7a7e", off: "#b8b8b8", back: "#c9c9c9" })[p.tone]};
`;
const Body = styled.div`flex: 1; display: flex; flex-direction: column; padding: 7px 6px 6px;`;
const Description = styled.p`
  height: 138px; margin: 0 1px 13px 0; padding: 8px 8px; border: 2px solid #bcbcbc; border-bottom-width: 1px; background: #fff;
  font: 400 25.7px/32px Lato, sans-serif; letter-spacing: 0; white-space: pre;
`;
const Field = styled.div<{ h: number }>`
  flex: 1; height: ${(p) => p.h}px; border: 2px solid #a9a9a9; border-radius: 4px; background: #fff; display: flex; align-items: center; padding-left: 5px;
  box-shadow: inset 0 2px 1px #ececec; letter-spacing: -0.22px;
`;
const SearchField = styled(Field)`padding-left: 14px; svg { width: 28px; height: 28px; }`;
const FilterRow = styled.div`display: flex; align-items: center; height: 47px; padding-left: 1px; gap: 14px;`;
const Heading = styled.h2<{ tall?: number }>`
  margin: 0; font-size: 26px; font-weight: 700; letter-spacing: 0.1px; line-height: ${(p) => p.tall ?? 57}px; white-space: nowrap;
`;
const HeadingRow = styled.div`display: flex; align-items: center; justify-content: space-between; height: 37px; margin-bottom: 16px; padding-right: 13px;`;
const Option = styled.label`display: flex; align-items: center; gap: 10px; font-size: 18px; letter-spacing: 0.12px; color: #222;`;
const SplitDots = styled.div`
  height: 10px; display: flex; justify-content: center; align-items: center; gap: 4px; padding-left: 7px;
  i { width: 2px; height: 3px; background: #b6b6b6; }
`;
const Table = styled.div<{ h: number }>`
  height: ${(p) => p.h}px; flex: none; margin-right: 1px; border: 2px solid #b9b9b9; border-width: 1px 1px 1px 2px; background: #fff;
  display: grid; grid-template-columns: minmax(0, 1fr) 28px; grid-template-rows: minmax(0, 1fr) 28px;
`;
const TableView = styled.div`overflow: hidden; display: flex; flex-direction: column;`;
const columns = css`display: grid; grid-template-columns: 716px 1fr; flex: none;`;
const HeadRow = styled.div<{ h: number }>`
  ${columns} height: ${(p) => p.h}px; background: linear-gradient(#fafafa, #eee); border-bottom: 2px solid #a9a9a9; color: #262626; overflow: hidden;
  span { line-height: 38px; padding-left: 4px; letter-spacing: 0; }
  span + span { border-left: 2px solid #c4c4c4; }
`;
const Row = styled.div<{ h: number; tone?: "alt" | "active" | "idle"; indent?: number }>`
  ${columns} height: ${(p) => p.h}px;
  background: ${(p) => (p.tone ? { alt: "#f4f5f4", active: "#808080", idle: "#dcdcdc" }[p.tone] : "#fff")};
  color: ${(p) => (p.tone === "active" ? "#fff" : "#000")};
  box-shadow: ${(p) => (p.tone === "active" ? "inset 0 2px 0 #727272, inset 0 -1px 0 #727272" : "none")};
  span { line-height: ${(p) => p.h - 1}px; padding-left: 8px; white-space: nowrap; letter-spacing: 0.1px; }
  span:first-child { padding-left: ${(p) => p.indent ?? 7}px; letter-spacing: -0.18px; }
`;
const VBar = styled.div`
  display: flex; flex-direction: column; border-left: 1px solid #bcbcbc; background: #e4e4e4;
`;
const HBar = styled.div`display: flex; border-top: 1px solid #bcbcbc; background: #e4e4e4;`;
const BarEnd = styled.span<{ len: number; row?: boolean }>`
  flex: none; ${(p) => (p.row ? `width: ${p.len}px;` : `height: ${p.len}px;`)} display: flex; align-items: center; justify-content: center; background: #f8f8f8;
`;
const Groove = styled.span<{ len: number }>`flex: 0 0 ${(p) => p.len}px;`;
const Thumb = styled.span<{ row?: boolean }>`
  flex: 1; border: 0 solid #b9b9b9;
  ${(p) => (p.row ? "border-width: 0 2px; background: linear-gradient(#fff, #efefef);" : "border-width: 2px 0; background: linear-gradient(90deg, #fff, #efefef);")}
`;
const EndGroove = styled(Groove)<{ row?: boolean }>`
  border: 0 solid #b9b9b9; ${(p) => (p.row ? "border-right-width: 2px;" : "border-bottom-width: 2px;")}
`;
const Corner = styled.div`border-left: 1px solid #bcbcbc; border-top: 1px solid #bcbcbc; background: #ececec;`;
const SelectedRow = styled.div`display: flex; align-items: center; margin: 13px 0; gap: 13px;`;
const InfoRow = styled.div`display: flex; height: 144px; gap: 13px; margin: 0 1px 14px 0;`;
const InfoBox = styled.div`width: 593px; border: 1px solid #b5b5b5; border-width: 2px 1px 1px 2px; background: #fff; display: flex;`;
const InfoText = styled.div`flex: 1; padding: 7px 8px; line-height: 32px; white-space: pre; letter-spacing: 0.05px;`;
const InfoBar = styled(VBar)`width: 29px;`;
const Preview = styled.div`
  flex: 1; border: 1px solid #b5b5b5; border-width: 2px 1px 1px 2px; background: #fff; display: flex; justify-content: center; padding: 2px 0 0 0;
  svg { display: block; width: 282px; height: 136px; overflow: visible; }
`;
const Buttons = styled.div`display: flex; gap: 12px; height: 47px;`;
const Button = styled.button<{ primary?: boolean; faded?: boolean; flat?: boolean }>`
  width: 160px; height: 47px; flex: none; padding: 0; border-radius: 5px; font: inherit; letter-spacing: inherit;
  color: ${(p) => (p.faded ? "#a9a9a9" : "#262626")};
  border: 2px solid ${(p) => (p.primary ? "#5297e8" : p.faded ? "#c3c3c3" : "#ababab")};
  background: ${(p) => (p.primary ? "linear-gradient(#fff, #e1e6f0)" : p.flat ? "#ececec" : "linear-gradient(#fff, #efefef)")};
`;
const Push = styled.span`flex: 1;`;
const BackBody = styled.div`flex: 1; display: flex; flex-direction: column; padding: 0 22px 22px 23px;`;
const BackTable = styled.div`
  flex: 1; margin: 20px 1px 13px 0; border: 2px solid #b0b0b0; border-top: 0; display: flex; align-items: flex-end; background: #ececec;
  span { height: 60px; }
`;
const BackCell = styled.span<{ w?: number; shade?: string }>`
  ${(p) => (p.w ? `flex: 0 0 ${p.w}px;` : "flex: 1;")} background: ${(p) => p.shade ?? "#ececec"}; border-right: 2px solid #b4b4b4;
`;
const BackEnd = styled.div`flex: 0 0 28px; height: 60px; display: flex; align-items: flex-end; justify-content: center; padding-bottom: 11px;`;
const BackArrow = styled(Triangle)`&& { height: 8px; }`;

/* ---------- icons ---------- */

const navy = "#2b3f56";
const blue = "#6f98c8";
const deep = "#2f5680";

const Plus = () => (
  <g>
    <rect x="30" y="30" width="18" height="18" rx="3.5" fill="#5b8c58" />
    <path d="M31 38V33.500Q31 31 33.500 31H44.500Q47 31 47 33.500V38Z" fill="#86ad84" />
    <path d="M39 33v12M33 39h12" stroke="#fff" strokeWidth="3.600" strokeLinecap="round" />
  </g>
);
const Star = () => (
  <g>
    <rect x="30" y="30" width="18" height="18" rx="3.500" fill="#c4a000" />
    <path d="M39 32v14M33 35.500l12 7M33 42.500l12-7" stroke="#fff" strokeWidth="2.800" strokeLinecap="round" />
  </g>
);
const Vee = () => (
  <g fill="#fff" stroke={navy} strokeWidth="2.200">
    <path d="M5 5 18 34 31 5H43" fill="none" strokeWidth="3.200" />
    <circle cx="5" cy="5" r="3.600" /><circle cx="18" cy="34" r="3.600" /><circle cx="31" cy="5" r="3.600" /><circle cx="43" cy="5" r="3.600" />
  </g>
);
const Feather = () => (
  <g>
    <path d="M4 38Q8 20 24 9 34 2 45 0 46 6 43 13 32 20 22 29 12 34 8 36Z" fill="#9dc0ea" stroke={deep} strokeWidth="1.800" />
    <path d="M14 29l9 0M18 24l10 0M22 20l13-1M26 15l14-1M31 10l12-1M36 6l8-1" stroke={deep} strokeWidth="1" />
    <path d="M1 48Q6 30 22 16 32 7 45 0" fill="none" stroke={navy} strokeWidth="2.200" />
  </g>
);
const Chip = () => (
  <g>
    <path d="M13 5v35M19.500 5v35M26 5v35M32.500 5v35M38 5v8" stroke="#2f4a78" strokeWidth="2" />
    <rect x="7" y="13" width="36" height="20" rx="1.500" fill={blue} stroke="#2f4a78" strokeWidth="2" />
  </g>
);
const Pencil = ({ x = 0, a = "#e3cf3d", b = "#a8941a" }: { x?: number; a?: string; b?: string }) => (
  <g transform={`translate(${x} 0)`}>
    <path d="M24 2 35 8 19 43 6 47 8 37Z" fill={a} stroke="#555" strokeWidth="1.400" />
    <path d="M29 5 35 8 19 43 14 39Z" fill={b} />
    <path d="M25 0l11 6-2 6-12-6Z" fill="#eee" stroke="#666" strokeWidth="1" />
    <path d="M8 35l11 7-13 6Z" fill="#c9c9c9" stroke="#555" strokeWidth="1" />
    <path d="M7 42l4 3-6 4Z" fill="#333" />
  </g>
);
const Tag = ({ label = "abc" }: { label?: string }) => (
  <g>
    <path d="M12 9H44V29H12L3 19Z" fill="#f7dd3c" stroke="#c4a000" strokeWidth="2" />
    <text x="10.500" y="25" fontFamily="Open Sans, sans-serif" fontSize="17" fontWeight="600" letterSpacing="-.3" fill="#333">{label}</text>
  </g>
);
const Pin = () => (
  <g>
    <path d="M35 18l3 12" stroke="#444" strokeWidth="6" strokeLinecap="round" />
    <path d="M35 18l3 12" stroke="#fff" strokeWidth="4" strokeLinecap="round" />
    <circle cx="38" cy="37" r="9.500" fill="#a01c20" /><circle cx="36" cy="33" r="3" fill="#d86a6c" />
  </g>
);
const GlobeBase = ({ sea, ring, line }: { sea: string; ring: string; line: string }) => (
  <g fill="none" stroke={line} strokeWidth="1.800">
    <ellipse cx="24" cy="21.500" rx="23" ry="20" fill={sea} stroke={ring} strokeWidth="2.200" />
    <ellipse cx="24" cy="21.500" rx="10" ry="19.500" /><path d="M2 21h44M6 11h36M6 32h36" />
  </g>
);
const Land = ({ fill = deep }: { fill?: string }) => (
  <path fill={fill} d="M7 11 18 8 19 12 14 17 15 21 10 18 6 16ZM14 22 20 25 18 33 15 31ZM24 8 40 9 44 16 38 18 35 22 31 16 26 15ZM22 18 31 18 33 23 28 34 25 25 21 23ZM36 28 42 27 40 32Z" />
);
const Page = ({ x, y }: { x: number; y: number }) => (
  <g transform={`translate(${x} ${y})`}>
    <path d="M1 1H17L24 9V32H1Z" fill="#fff" stroke="#4c4c4c" strokeWidth="2.200" />
    <path d="M16 1V10H24M6 10h7M6 15h13M6 20h13M6 25h13" fill="none" stroke="#777" strokeWidth="1.800" />
  </g>
);

const Svg = ({ children, box = 48 }: { children: React.ReactNode; box?: number }) => <svg viewBox={`0 0 ${box} ${box}`}>{children}</svg>;

const TopBar = () => (
  <Toolbar>
    <Grip />
    <Slot gap={15}><Svg><path d="M1 17 24 13 28 34 9 43Z" fill="#c75b2b" stroke="#8c3d18" /><path d="M8 5 32 4 34 33 13 35Z" fill="#e3b81a" stroke="#9a7b08" /><path d="M21 1 47 6 41 32 15 28Z" fill={blue} stroke="#2f4a78" strokeWidth="1.600" /><Plus /></Svg></Slot>
    <Slot><Svg><circle cx="24" cy="18" r="17" fill="#a9c7ec" stroke="#4a76ad" /><path fill={deep} d="M11 12 20 7 22 13 17 18 18 25 12 20ZM26 6 37 9 38 20 33 24 30 15 26 14ZM22 19 28 19 27 28 23 26Z" /><path d="M1 16 24 29V48L1 33Z" fill="#d6a602" stroke="#222" strokeWidth="1.300" /><path d="M47 16 24 29V48L47 33Z" fill="#fdf36b" stroke="#222" strokeWidth="1.300" /><Star /></Svg></Slot>
    <Slot><Svg><Vee /><Star /></Svg></Slot>
    <Slot><Svg><Feather /><Star /></Svg></Slot>
    <Slot><Svg><Chip /><Star /></Svg></Slot>
    <Grip gap={26} />
    <Slot gap={17} dim><Svg><Pencil x={-3} a="#c9a9a3" b="#a88680" /><Pencil x={8} a="#c9a9a3" b="#a88680" /><path d="M39 43h11l-5.500 6Z" fill="#000" /></Svg></Slot>
    <Slot><Svg><Pencil x={2} /></Svg></Slot>
    <Slot dim><Svg><rect x="2" y="3" width="38" height="38" rx="4" fill="#c8ccc8" stroke="#8a8a8a" strokeWidth="2" /><rect x="9" y="4" width="24" height="15" fill="#fff" stroke="#999" /><path d="M12 8h18M12 12h18M12 16h18" stroke="#aaa" strokeWidth="2" /><rect x="10" y="28" width="22" height="12" fill="#fff" stroke="#999" /><rect x="12" y="30" width="6" height="9" fill="#999" /><g transform="translate(22 14) scale(.68)"><Pencil a="#c9a9a3" b="#a88680" /></g></Svg></Slot>
    <Slot dim><Svg><path d="M2 13Q3 3 13 3 20 3 24 6 30 2 38 3 46 5 45 13 44 24 34 24 28 24 24 21 18 24 13 24 4 24 2 13Z" fill="#b9c4bb" stroke="#7f8a80" strokeWidth="2" /><rect x="26" y="26" width="21" height="22" rx="4" fill="#a89b6a" /><path d="M36.500 29v16M29.500 33l14 8M29.500 41l14-8" stroke="#fff" strokeWidth="3" /><circle cx="36.500" cy="37" r="3" fill="#a89b6a" stroke="#fff" strokeWidth="2" /></Svg></Slot>
    <Slot dim><Svg><path d="M13 12H37M10 16 1 42" stroke="#666" strokeWidth="2.400" /><path d="M6 7h10v10H6ZM6 7l10 10M16 7 6 17" fill="#fff" stroke="#666" strokeWidth="2.200" /><path d="M18 24 40 44M38 20 18 44" stroke="#6d6a4d" strokeWidth="6" /><path d="M19 26 38 43M37 22 19 43" stroke="#cfcbb0" strokeWidth="3" /><path d="M14 30Q12 19 22 19l5 5-7 8Z" fill="#bbb" stroke="#777" /></Svg></Slot>
    <MenuArrow size={16} tall={8} />
    <Slot gap={20} dim><Svg><g fill="#d8cf9a" stroke="#a0925a" strokeWidth="2"><path d="M3 4h38v10H3ZM3 18h38v10H3ZM3 32h38v10H3Z" /></g><Pencil x={9} a="#c9a9a3" b="#a88680" /></Svg></Slot>
    <Slot dim><Svg><path d="M8 11H39M17 7Q24 2 31 7" fill="none" stroke="#9d5c5c" strokeWidth="4" /><path d="M10 17H38L35 45H12Z" fill="#e7cfcf" stroke="#9d5c5c" strokeWidth="3" /><path d="M18 20v22M24 20v22M30 20v22" stroke="#9d5c5c" strokeWidth="3" /></Svg></Slot>
    <Slot dim><Svg><path d="M5 8 38 32" fill="none" stroke="#666" strokeWidth="4" /><path d="M2 22 26 24 42 18" stroke="#888" strokeWidth="3.600" fill="none" /><ellipse cx="39" cy="16" rx="6" ry="4" fill="none" stroke="#7a5a5a" strokeWidth="2.800" transform="rotate(-30 39 16)" /><ellipse cx="38" cy="35" rx="6" ry="5" fill="none" stroke="#7a5a5a" strokeWidth="2.800" transform="rotate(60 38 35)" /></Svg></Slot>
    <Slot><Svg><g opacity=".6"><Page x={16} y={4} /></g><Page x={7} y={11} /></Svg></Slot>
    <Slot dim><Svg><rect x="8" y="5" width="32" height="38" fill="#c9c9a6" stroke="#888" strokeWidth="2.200" /><path d="M15 2H32V10H15Z" fill="#eee" stroke="#888" strokeWidth="2" /><path d="M13 12H29L35 18V39H13Z" fill="#fff" stroke="#777" strokeWidth="1.800" /><path d="M17 19h9M17 24h14M17 29h14M17 34h10" stroke="#999" strokeWidth="1.800" /></Svg></Slot>
    <Slot dim><Svg><path d="M20 6V16H26Q41 17 41 29 41 38 32 43H25Q33 38 32 31 31 26 24 26H20V37L6 21Z" fill="#c5a698" stroke="#9c7c6c" strokeWidth="1.500" /></Svg></Slot>
    <Slot dim><Svg><path d="M28 6V16H22Q7 17 7 29 7 38 16 43H23Q15 38 16 31 17 26 24 26H28V37L42 21Z" fill="#b5c7b8" stroke="#7f9483" strokeWidth="1.500" /></Svg></Slot>
    <Grip gap={23} />
    <Slot gap={13}><Svg><Tag /></Svg></Slot>
    <Slot gap={20}><Svg><ellipse cx="20" cy="17" rx="13" ry="13" fill="#d21a1a" /><path d="M20 17 10 8A13 13 0 0 1 30 8Z" fill="#f4c400" /><path d="M20 17 10 8A13 13 0 0 0 20 30Z" fill="#00a650" /><circle cx="20" cy="17" r="13.500" fill="none" stroke="#333" strokeWidth="1.400" /><path d="M23 32h7v13h-7Z" fill="#f6b500" stroke="#d38a00" /><path d="M30 21h7v24h-7Z" fill="#00a650" stroke="#14431f" strokeWidth="1.500" /><path d="M38 35h6v10h-6Z" fill="#c21313" stroke="#333" /></Svg></Slot>
    <Slot><Svg><rect x="1" y="5" width="46" height="38" fill="#cfe0f5" stroke="#1a6fd8" strokeWidth="2.200" /><Tag label="ab" /><Pin /></Svg></Slot>
    <Slot dim><Svg><Tag label="ab" /><Pin /></Svg></Slot>
    <Slot dim><Svg><Tag /><path d="M17 39Q31 26 47 38 32 50 17 39Z" fill="#fff" stroke="#444" strokeWidth="2" /><circle cx="32" cy="38" r="6" fill="#7d8fa8" /><circle cx="32" cy="38" r="3" fill="#222" /></Svg></Slot>
    <Slot dim><Svg><Tag /><rect x="27" y="27" width="21" height="21" rx="4" fill="#8b969e" /><path d="M30 34h7v-4l8 7.500-8 7.500v-4h-7Z" fill="#fff" /></Svg></Slot>
    <Slot dim><Svg><Tag /><rect x="27" y="27" width="21" height="21" rx="4" fill="#8b969e" /><path d="M32 38A6 6 0 1 1 38 44" fill="none" stroke="#fff" strokeWidth="4" /><path d="M28 37h9l-4 7Z" fill="#fff" /></Svg></Slot>
    <Slot dim><Svg><Tag /><rect x="27" y="27" width="21" height="21" rx="4" fill="#a8a47c" /><path d="M44 30 36 42 31 45 32 39Z" fill="#fff" /></Svg></Slot>
    <Grip gap={26} />
    <Slot gap={16}><Svg><g transform="scale(1 1.08)"><GlobeBase sea="#8fb3de" ring="#2d4d78" line="#fff" /></g><path d="M9 40 17 26H23V30H27V26H33L41 40V42H29L25 36 21 42H9Z" fill="#000" /><g fill="#fff" stroke="#000" strokeWidth="2.800"><circle cx="16" cy="41" r="6.500" /><circle cx="38" cy="41" r="6.500" /></g></Svg></Slot>
    <Grip gap={25} />
    <Slot gap={16}><Svg><path d="M24 4Q14 4 14 11V17H25V19H9Q4 19 4 27 4 34 9 34H13V29Q13 24 19 24H29Q34 24 34 19V11Q34 4 24 4Z" fill="#3d75a9" /><path d="M25 45Q34 45 34 39V33H24V31H39Q44 31 44 23 44 15 39 15H36V20Q36 26 30 26H20Q15 27 15 32V39Q15 45 25 45Z" fill="#fdd047" /><circle cx="19" cy="10" r="2" fill="#fff" /><circle cx="29" cy="39" r="2" fill="#fff" /><path d="M34 34 45 39 34 45" fill="none" stroke="#555" strokeWidth="2.600" /></Svg></Slot>
    <Slot gap={21}><Svg><path d="M24 0V48" stroke="#e01818" strokeWidth="3" /><g stroke="#000" strokeWidth="3" strokeLinejoin="round"><path d="M7 42 11 32Q25 40 29 30L41 26 39 34Q36 40 32 42Q22 38 7 42Z" fill="#25e31a" /><path d="M6 31 10 20Q26 22 38 16L34 28Q22 34 6 31Z" fill="#f6ee18" /><path d="M3 18Q8 8 14 8 28 10 39 6L36 16Q20 20 3 18Z" fill="#16c3d8" /></g><path d="M24 0V8M24 18v6M23 44v5" stroke="#e01818" strokeWidth="3.400" /></Svg></Slot>
    <Grip gap={23} />
    <Slot gap={18}><Svg><rect x="3" y="3" width="40" height="41" fill={blue} stroke="#1f2d3c" strokeWidth="2" /><rect x="3" y="3" width="10" height="41" fill="#273b50" /><text x="20" y="33" fontFamily="Liberation Serif, serif" fontSize="31" fill="#fff">?</text></Svg></Slot>
    <Grip gap={24} />
  </Toolbar>
);

const SideIcons: { icon: React.ReactNode; menu?: boolean }[] = [
  { icon: <><Vee /><Plus /></> },
  { icon: <><path d="M0 0h39v26H26v13H0Z" fill={blue} /><path d="M0 0h13v13H0ZM26 0h13v13H26ZM13 13h13v13H13ZM0 26h13v13H0Z" fill="#263f5e" /><Plus /></> },
  { icon: <><path d="M8 11Q9 3 18 3 30 4 30 16 29 31 12 36L11 32Q20 28 22 17 9 20 8 11Z" fill={blue} stroke={deep} strokeWidth="2" /><Plus /></> },
  { icon: <><Feather /><Plus /></> },
  { icon: <><rect x="3" y="1" width="42" height="40" rx="3" fill="#bfcfe3" stroke="#3d5a7c" strokeWidth="1.500" /><path d="M6 3 17 32 31 3H43" fill="none" stroke={navy} strokeWidth="2.500" /><g fill="#fff" stroke={navy} strokeWidth="2"><circle cx="17" cy="32" r="4" /><path d="M4 1a4 4 0 0 0 7 3V1ZM26 1a4 4 0 0 0 8 0ZM38 1a4 4 0 0 0 6 2V1Z" /></g><Plus /></> },
  { icon: <><path d="M1 10Q2 1 12 2 18 0 23 3 34 0 35 9 36 17 31 22 35 24 35 22L33 26Q28 26 27 22V33Q26 37 22 36 18 35 18 30V23Q14 24 12 20L10 26Q2 22 1 10Z" fill={blue} stroke={deep} strokeWidth="2.400" /><path d="M12 3Q8 12 12 20 17 22 17 14M23 3Q30 10 27 22M21 12Q19 18 23 20" fill="none" stroke={deep} strokeWidth="2.200" /><Plus /></>, menu: true },
  { icon: <><GlobeBase sea="#bcd2ee" ring={blue} line="#fff" /><Land /><Plus /></>, menu: true },
  { icon: <><ellipse cx="24" cy="21.500" rx="23" ry="20" fill={deep} stroke={navy} strokeWidth="2" /><path d="M6 11h36L38 5H10ZM2 21h44l-3-10H5ZM6 32h36l-6 6H12Z" fill={blue} /><path d="M10 11h28l3 10H8ZM6 32h36M2 21h44" fill={blue} /><path d="M15 21h18l-2 11H17Z" fill={blue} /><path d="M5 11h38M2 21h44M6 32h36" stroke="#fff" strokeWidth="1.800" /><ellipse cx="24" cy="21.500" rx="10" ry="19.500" fill="none" stroke="#fff" strokeWidth="1.800" /><Plus /></> },
  { icon: <><GlobeBase sea="#f2f5f9" ring="#5a8bc9" line="#7ba3d8" /><g transform="translate(8 8) scale(.7)"><Vee /></g><Plus /></>, menu: true },
  { icon: <><Vee /><Star /></>, menu: true },
];

const Side = () => (
  <SideBar>
    <SideGrip wide />
    {SideIcons.map((s, i) => (
      <SideRow key={i}>
        <Slot gap={0}><Svg>{s.icon}</Svg></Slot>
        {s.menu && <Triangle size={16} tall={8} />}
      </SideRow>
    ))}
  </SideBar>
);

const Layers = () => (
  <LayersPanel>
    <PanelTitle>
      <span>Layers</span>
      <PanelButton><svg viewBox="0 0 17 17" fill="none" stroke="#555" strokeWidth="2"><rect x="6" y="2" width="8" height="8" /><path d="M6 6H2v8h8v-4" /></svg></PanelButton>
      <PanelButton><svg viewBox="0 0 17 17" fill="none" stroke="#555" strokeWidth="3.500"><path d="M3 3l11 11M14 3 3 14" /></svg></PanelButton>
    </PanelTitle>
    <PanelTools>
      <Svg box={32}><path d="M4 15 9 6 22 12 16 24Z" fill="#f1e05a" /><path d="M1 24 5 14 17 20 12 29Z" fill="#e23c3c" /><path d="M9 7 13 5 18 9 14 13Z" fill="#5d8fd4" /><path d="M10 20 17 13 24 19 18 29Z" fill="#d99a4e" stroke="#a86d25" /><path d="M20 16 29 5" stroke="#d18a3a" strokeWidth="4" strokeLinecap="round" /></Svg>
      <Svg box={32}><path d="M12 4h15v18H12ZM7 9H6v18h14M2 15v16h14" fill="none" stroke="#8a8a86" strokeWidth="2" /><path d="M17 4v17a3 3 0 0 0 5 0V3a2 2 0 0 0-4 0" fill="none" stroke="#5a7fa8" strokeWidth="2" /><g transform="translate(1 1) scale(.64)"><Plus /></g></Svg>
      <Svg box={32}><path d="M1 10Q14 0 28 8" fill="none" stroke="#999" strokeWidth="2.200" /><path d="M1 17Q15 4 31 16 15 28 1 17Z" fill="#fff" stroke="#8b8b8b" strokeWidth="2" /><circle cx="15" cy="16" r="7.500" fill={blue} stroke={deep} strokeWidth="1.200" /><circle cx="15" cy="15" r="3.600" fill="#111" /><path d="M24 27h11l-5.500 6Z" fill="#585858" /></Svg>
      <Svg box={32}><path d="M2 6H30L19 19V32L13 28V19Z" fill={blue} stroke={deep} strokeWidth="1.500" /><path d="M2 1H30V6.500H2Z" fill="#fbe34a" stroke="#b59a13" /></Svg>
      <Svg box={32}><text x="1" y="21" fontFamily="Liberation Serif, serif" fontSize="37" fill="#6a3870">ε</text><path d="M16 17H30L26 23V32H20V23Z" fill="#b5b5b5" stroke="#8a8a86" strokeWidth="1.500" /></Svg>
      <PanelArrow size={15} tall={9} />
      <Svg box={32}><path d="M1 3H27M5 4V29M5 13h5M5 27h5" stroke="#8f8f8b" strokeWidth="2" /><path d="M9 9h5v5H9ZM9 23h5v5H9Z" fill="#ffd23c" stroke="#f18b1a" strokeWidth="2" /><path d="M17 2H24V17H30L20.500 30 11 17H17Z" fill={blue} stroke={deep} strokeWidth="1.600" /></Svg>
      <Svg box={32}><path d="M1 3H27M5 4V29M5 13h5M5 27h5" stroke="#8f8f8b" strokeWidth="2" /><path d="M9 9h5v5H9ZM9 23h5v5H9Z" fill="#ffd23c" stroke="#f18b1a" strokeWidth="2" /><path d="M17 29H24V13H30L20.500 0 11 13H17Z" fill={blue} stroke={deep} strokeWidth="1.600" /></Svg>
      <Svg box={32}><rect x="2" y="2" width="23" height="24" fill="none" stroke="#8f8f8b" strokeWidth="2.200" /><rect x="18" y="21" width="12" height="11" rx="2.500" fill="#ef4b53" /><path d="M20.500 26.500h7" stroke="#fff" strokeWidth="2.400" /></Svg>
    </PanelTools>
    <Tree>
      <LayerRow>
        <CheckBox><svg viewBox="0 0 22 22"><path d="M4 12 9 18 18 2" fill="none" stroke="#1c1c1c" strokeWidth="3" /></svg></CheckBox>
        <Swatch />
        <LayerName>ne_10m_admin_1_states_provinces</LayerName>
      </LayerRow>
    </Tree>
  </LayersPanel>
);

const MapCanvas = () => (
  <Canvas>
    <svg width="2047" height="1320" viewBox="826 74 2047 1320">
      <defs>
        <clipPath id="land"><path d={MAIN_LAND} /></clipPath>
        <clipPath id="isles"><path d={ISLAND_PATH} /></clipPath>
      </defs>
      <g stroke="#232323" strokeWidth="1.500" strokeLinejoin="round">
        <path d={MAIN_LAND} fill="#00e6eb" />
        <path d={ISLAND_PATH} fill="#00e6eb" />
        <path d={ANTARCTICA_PATH} fill="#00e6eb" />
        <g clipPath="url(#land)" fill="none"><path d={DISTRICTS} strokeWidth="1.400" /></g>
        <path d={BORDERS} fill="none" />
        <path d={STRAIGHT_BORDERS} fill="none" />
        <g clipPath="url(#isles)" fill="none"><path d={ISLAND_DISTRICTS} /></g>
        <path d={SEAS} fill="#fff" />
      </g>
      <path d={SPECK_PATH} fill="#232323" stroke="#232323" strokeWidth=".5" />
    </svg>
  </Canvas>
);

const MiniMap = () => (
  <svg viewBox="875 348 1951 943" preserveAspectRatio="none">
    <g fill="#ebe9df" stroke="#8d8b82" strokeWidth="9" strokeLinejoin="round">
      <path d={MAIN_LAND} /><path d={AMERICA_PATH} /><path d={ISLAND_PATH} /><path d={ANTARCTICA_PATH} />
      <path d={MINI_BORDERS + MINI_MESH} fill="none" />
      <path d={SEAS} fill="#fff" />
      <path d={SPECK_PATH} strokeWidth="3" opacity=".7" />
      <path d={WESTERN_SPECKS} strokeWidth="6" />
    </g>
    <path d="M1850 721V888M1767 804H1933" stroke="#b957d8" strokeWidth="42" />
  </svg>
);

const VScroll = ({ before, after, end = 26 }: { before: number; after: number; end?: number }) => (
  <>
    <BarEnd len={27}><Triangle size={16} tall={8} dir="up" /></BarEnd>
    {before > 0 && <Groove len={before} />}
    <Thumb />
    {after > 0 && <EndGroove len={after} />}
    <BarEnd len={end}><Triangle size={16} tall={8} /></BarEnd>
  </>
);
const HScroll = () => (
  <HBar>
    <BarEnd len={25} row><Triangle size={8} tall={16} dir="left" /></BarEnd>
    <Thumb row />
    <EndGroove len={30} row />
    <BarEnd len={28} row><Triangle size={8} tall={16} dir="right" /></BarEnd>
  </HBar>
);

type Item = { name: string; id: string; tone?: "alt" | "active" | "idle" };
const RECENT: Item[] = [
  { name: "WGS_1984_Web_Mercator_Auxiliary_Sphere", id: "EPSG:102100" },
  { name: "WGS 84 / Pseudo-Mercator", id: "EPSG:3857", tone: "alt" },
  { name: "WGS84 / Simple Mercator", id: "EPSG:41001" },
  { name: "North_America_Albers_Equal_Area_Conic", id: "EPSG:102008", tone: "active" },
  { name: "USA_Contiguous_Albers_Equal_Area_Conic", id: "EPSG:102003" },
  { name: "WGS 84", id: "EPSG:4326", tone: "alt" },
  { name: "NAD83(NSRS2007) / Alaska Albers", id: "EPSG:3467" },
];
const WORLD: Item[] = [
  { name: "NAD83(NSRS2007) / Conus Albers", id: "EPSG:5072" },
  { name: "NAD83(NSRS2007) / Florida GDL Albers", id: "EPSG:3513", tone: "alt" },
  { name: "NAD83(NSRS2007) / Texas Centric Albers Equ...", id: "EPSG:3665" },
  { name: "North_America_Albers_Equal_Area_Conic", id: "EPSG:102008", tone: "idle" },
  { name: "South_America_Albers_Equal_Area_Conic", id: "EPSG:102033" },
];

const CrsTable = ({ items, h, head, rowHeight, indent, before, after }: { items: Item[]; h: number; head: number; rowHeight: number; indent?: number; before: number; after: number }) => (
  <Table h={h}>
    <TableView>
      <HeadRow h={head}><span>Coordinate Reference System</span><span>Authority ID</span></HeadRow>
      {items.map((r) => (
        <Row key={r.id} h={rowHeight} tone={r.tone} indent={indent}><span>{r.name}</span><span>{r.id}</span></Row>
      ))}
    </TableView>
    <VBar><VScroll before={before} after={after} /></VBar>
    <HScroll />
    <Corner />
  </Table>
);

const SaveWindow = () => (
  <Window x={825} y={60} w={1183} h={1308} back>
    <TitleBar back>
      <Lights><Light tone="back" /><Light tone="back" /><Light tone="back" /></Lights>
      <span>Save Vector Layer as...</span>
    </TitleBar>
    <BackBody>
      <BackTable>
        <BackCell w={22} shade="#e4e4e4" /><BackCell w={181} shade="#dedede" /><BackCell /><BackCell w={25} shade="#d8d8d8" /><BackCell w={20} />
        <BackEnd><BackArrow size={16} tall={8} /></BackEnd>
      </BackTable>
      <Buttons><Button flat>Help</Button><Push /><Button flat>Cancel</Button><Button flat faded>OK</Button></Buttons>
    </BackBody>
  </Window>
);

const SelectorWindow = () => (
  <Window x={792} y={94} w={1210} h={1170}>
    <TitleBar>
      <Lights><Light tone="on" /><Light tone="off" /><Light tone="on" /></Lights>
      <span>Coordinate Reference System Selector</span>
    </TitleBar>
    <Body>
      <Description>{"Select the coordinate reference system for the vector file. The data points will be transformed from the\nlayer coordinate reference system."}</Description>
      <FilterRow>
        <span>Filter</span>
        <SearchField h={47}><svg viewBox="0 0 28 28" fill="none" stroke="#979797" strokeWidth="2.400"><circle cx="12" cy="11" r="8.500" /><path d="M18 17.500 26 26" strokeWidth="3" /></svg></SearchField>
      </FilterRow>
      <Heading>Recently used coordinate reference systems</Heading>
      <CrsTable items={RECENT} h={274} head={35} rowHeight={32} before={0} after={50} />
      <SplitDots><i /><i /><i /><i /><i /><i /></SplitDots>
      <HeadingRow>
        <Heading tall={39}>Coordinate reference systems of the world</Heading>
        <Option><CheckBox />Hide deprecated CRSs</Option>
      </HeadingRow>
      <CrsTable items={WORLD} h={242} head={34} rowHeight={36} indent={127} before={13} after={91} />
      <SelectedRow><Heading tall={47}>Selected CRS</Heading><Field h={48}>North_America_Albers_Equal_Area_Conic</Field></SelectedRow>
      <InfoRow>
        <InfoBox>
          <InfoText>{"Extent: Extent not known\nProj4: +proj=aea +lat_1=20 +lat_2=60\n+lat_0=40 +lon_0=-96 +x_0=0 +y_0=0\n+datum=NAD83 +units=m +no_defs"}</InfoText>
          <InfoBar><VScroll before={0} after={0} end={28} /></InfoBar>
        </InfoBox>
        <Preview><MiniMap /></Preview>
      </InfoRow>
      <Buttons><Button>Help</Button><Push /><Button>Cancel</Button><Button primary>OK</Button></Buttons>
    </Body>
  </Window>
);

export default function App() {
  return (
    <>
      <GlobalStyle />
      <Screen>
        <TopBar />
        <Workspace>
          <Side />
          <Layers />
          <SplitBar />
          <MapCanvas />
        </Workspace>
        <SaveWindow />
        <SelectorWindow />
      </Screen>
    </>
  );
}
